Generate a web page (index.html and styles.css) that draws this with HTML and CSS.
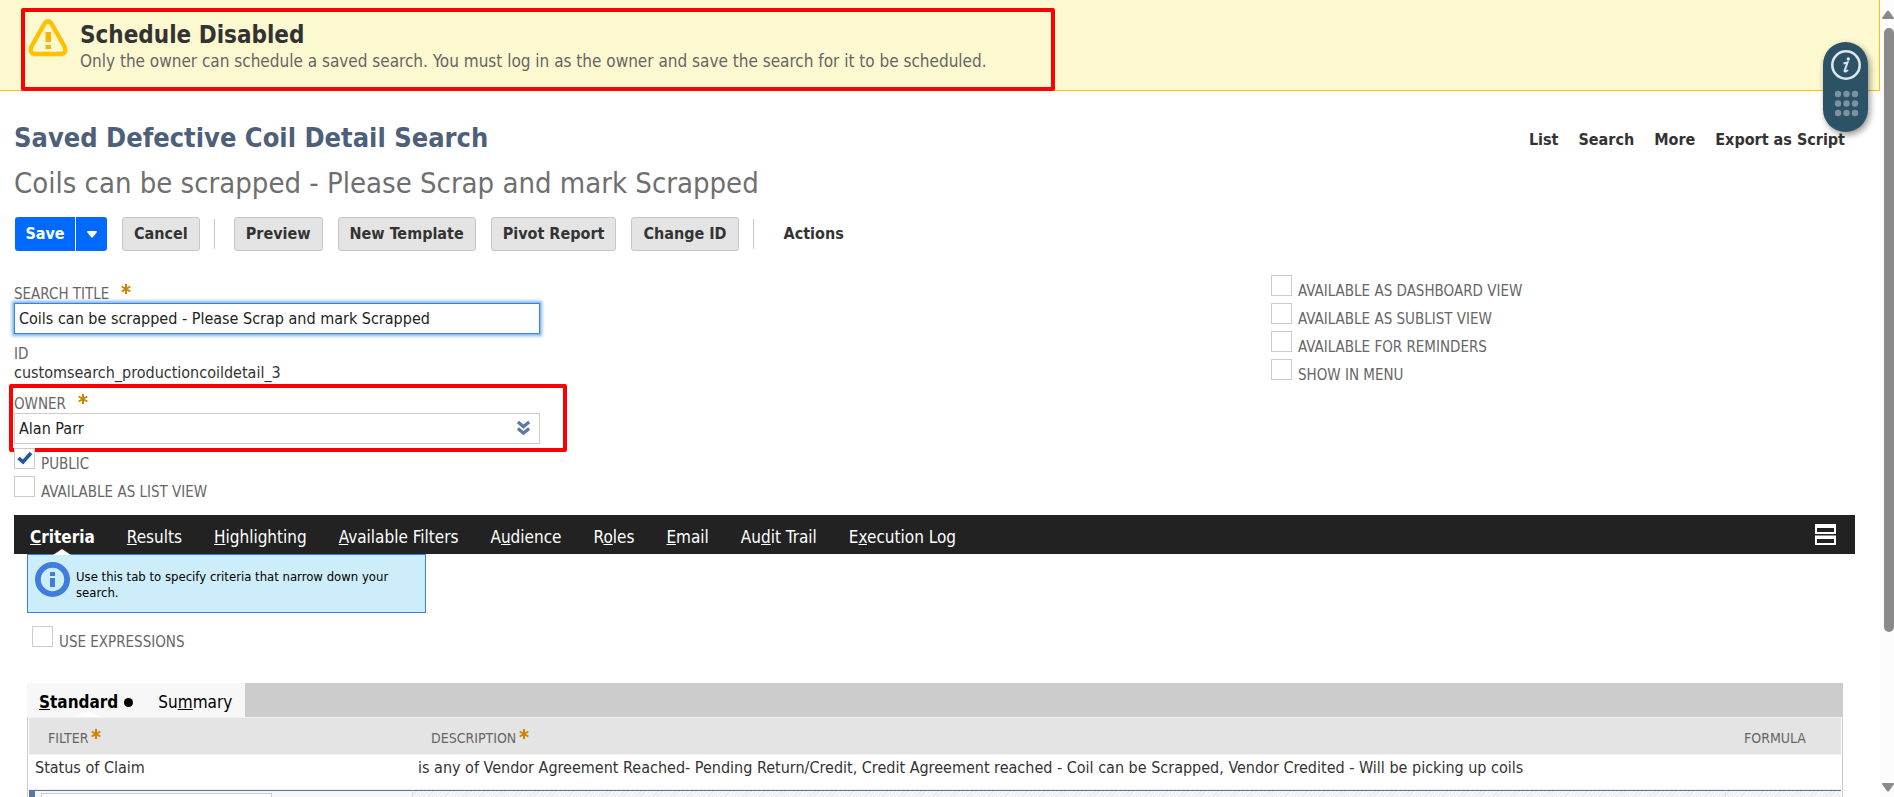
FILE: index.html
```html
<!DOCTYPE html>
<html lang="en">
<head>
<meta charset="utf-8">
<title>Saved Defective Coil Detail Search</title>
<link rel="stylesheet" href="styles.css">
</head>
<body>
<div class="page">
  <div class="banner" role="alert">
    <svg class="banner-icon" viewBox="0 0 40 38" aria-hidden="true">
      <path d="M16 5.500Q20 -1 24 5.500L36.500 27.500Q39 34.500 33 35H7Q1 34.500 3.500 27.500Z" fill="none" stroke="#ffc000" stroke-width="4.500" stroke-linejoin="round"/>
      <path d="M17.500 13h5.500v10h-5.500zM17.500 26h5.500v4h-5.500z" fill="#ffb000"/>
    </svg>
    <div>
      <h2 class="banner-title">Schedule Disabled</h2>
      <p class="banner-text">Only the owner can schedule a saved search. You must log in as the owner and save the search for it to be scheduled.</p>
    </div>
    <div class="mark mark-banner"></div>
  </div>

  <main class="main">
    <header class="head">
      <h1 class="title">Saved Defective Coil Detail Search</h1>
      <nav class="links">
        <a href="#">List</a><a href="#">Search</a><a href="#">More</a><a href="#">Export as Script</a>
      </nav>
    </header>
    <h2 class="record">Coils can be scrapped - Please Scrap and mark Scrapped</h2>

    <div class="toolbar">
      <div class="split">
        <button class="save" type="button">Save</button>
        <button class="save-more" type="button" aria-label="More save options"><svg width="10" height="7" viewBox="0 0 10 7"><path d="M0 1Q0 0 1 0H9Q10 0 10 1L6 6Q5 7 4 6Z" fill="#fff"/></svg></button>
      </div>
      <button class="btn" type="button">Cancel</button>
      <span class="sep"></span>
      <button class="btn first" type="button">Preview</button>
      <button class="btn" type="button">New Template</button>
      <button class="btn" type="button">Pivot Report</button>
      <button class="btn" type="button">Change ID</button>
      <span class="sep"></span>
      <button class="plain" type="button">Actions</button>
    </div>

    <div class="form">
      <div class="col">
        <div class="label-row"><label for="t">SEARCH TITLE</label><svg class="star" viewBox="0 0 10 10"><path d="M5 0V10M.7 2.500L9.300 7.500M.7 7.500L9.300 2.500"/></svg></div>
        <input class="text focus" id="t" type="text" value="Coils can be scrapped - Please Scrap and mark Scrapped">
        <div class="static"><span class="caption">ID</span><span class="value">customsearch_productioncoildetail_3</span></div>
        <div class="owner">
          <div class="label-row"><label for="o">OWNER</label><svg class="star" viewBox="0 0 10 10"><path d="M5 0V10M.7 2.500L9.300 7.500M.7 7.500L9.300 2.500"/></svg></div>
          <select class="text" id="o"><option>Alan Parr</option></select>
          <svg class="chevrons" viewBox="0 0 16 16"><path d="M2 1.500L8 6.500L14 1.500M2 8.500L8 13.500L14 8.500" fill="none" stroke="#5f7a9f" stroke-width="3.500"/></svg>
          <div class="mark mark-owner"></div>
        </div>
        <label class="check"><input type="checkbox" checked><svg class="tick" viewBox="0 0 16 14"><path d="M1.500 7L6 11L14 2" fill="none" stroke="#1f57a4" stroke-width="3.500"/></svg>PUBLIC</label>
        <label class="check"><input type="checkbox">AVAILABLE AS LIST VIEW</label>
      </div>
      <div class="col">
        <label class="check"><input type="checkbox">AVAILABLE AS DASHBOARD VIEW</label>
        <label class="check"><input type="checkbox">AVAILABLE AS SUBLIST VIEW</label>
        <label class="check"><input type="checkbox">AVAILABLE FOR REMINDERS</label>
        <label class="check"><input type="checkbox">SHOW IN MENU</label>
      </div>
    </div>

    <nav class="tabs">
      <a class="on" href="#"><u>C</u>riteria</a>
      <a href="#"><u>R</u>esults</a>
      <a href="#"><u>H</u>ighlighting</a>
      <a href="#"><u>A</u>vailable Filters</a>
      <a href="#">A<u>u</u>dience</a>
      <a href="#">R<u>o</u>les</a>
      <a href="#"><u>E</u>mail</a>
      <a href="#">Au<u>d</u>it Trail</a>
      <a href="#">E<u>x</u>ecution Log</a>
      <button class="layout" type="button" aria-label="Unlayered view"><svg width="21" height="21" viewBox="0 0 21 21"><path fill="#fff" fill-rule="evenodd" d="M0 0H21V10H0ZM2 4V8H19V4ZM0 11.500H21V21H0ZM2 15V19H19V15Z"/></svg></button>
    </nav>

    <section class="panel">
      <div class="hint">
        <svg class="hint-icon" viewBox="0 0 35 35"><circle cx="17.500" cy="17.500" r="14.600" fill="none" stroke="#3f7ddc" stroke-width="5.800"/><path d="M15 10h5v4h-5zM15 16h5v9h-5z" fill="#3f7ddc"/></svg>
        <p>Use this tab to specify criteria that narrow down your search.</p>
      </div>
      <label class="check expr"><input type="checkbox">USE EXPRESSIONS</label>

      <div class="subtabs">
        <a class="on" href="#"><span><u>S</u>tandard</span><span class="dot"></span></a>
        <a href="#">Su<u>m</u>mary</a>
      </div>
      <table class="grid">
        <colgroup><col class="c-edge"><col class="c-filter"><col><col class="c-formula"></colgroup>
        <thead>
          <tr><th colspan="2">FILTER<svg class="star" viewBox="0 0 10 10"><path d="M5 0V10M.7 2.500L9.300 7.500M.7 7.500L9.300 2.500"/></svg></th><th>DESCRIPTION<svg class="star" viewBox="0 0 10 10"><path d="M5 0V10M.7 2.500L9.300 7.500M.7 7.500L9.300 2.500"/></svg></th><th>FORMULA</th></tr>
        </thead>
        <tbody>
          <tr><td colspan="2">Status of Claim</td><td>is any of Vendor Agreement Reached- Pending Return/Credit, Credit Agreement reached - Coil can be Scrapped, Vendor Credited - Will be picking up coils</td><td></td></tr>
          <tr class="edit"><td class="handle"></td><td><input type="text" aria-label="Filter"></td><td class="hatch"></td><td class="hatch"></td></tr>
        </tbody>
      </table>
    </section>
  </main>
</div>

<div class="scroll" aria-hidden="true">
  <svg width="12" height="9" viewBox="0 0 12 9"><path d="M5 1Q6 0 7 1L12 8Q12 9 11 9H1Q0 9 0 8Z" fill="#8a8a8a"/></svg>
  <div class="track"><div class="thumb"></div></div>
  <svg width="12" height="9" viewBox="0 0 12 9"><path d="M5 8Q6 9 7 8L12 1Q12 0 11 0H1Q0 0 0 1Z" fill="#8a8a8a"/></svg>
</div>

<div class="widget">
  <svg width="45" height="90" viewBox="0 0 45 90">
    <circle cx="23" cy="23" r="13.700" fill="none" stroke="#dfe5ec" stroke-width="2.600"/>
    <circle cx="25.300" cy="17" r="1.700" fill="#dfe5ec"/>
    <path d="M20.500 21.500L24.500 20.500L21.500 29Q22 30.500 25 28" fill="none" stroke="#dfe5ec" stroke-width="2"/>
    <g fill="#7b93a1"><circle cx="15" cy="52" r="3.200"/><circle cx="23.500" cy="52" r="3.200"/><circle cx="32" cy="52" r="3.200"/><circle cx="15" cy="61.500" r="3.200"/><circle cx="23.500" cy="61.500" r="3.200"/><circle cx="32" cy="61.500" r="3.200"/><circle cx="15" cy="71" r="3.200"/><circle cx="23.500" cy="71" r="3.200"/><circle cx="32" cy="71" r="3.200"/></g>
  </svg>
</div>
</body>
</html>
```
FILE: styles.css
```css
* { box-sizing: border-box; }
body {
  margin: 0;
  display: flex;
  height: 100vh;
  overflow: hidden;
  background: #fff;
  color: #333;
  font: 16px/20px "DejaVu Sans Condensed", "Noto Sans", sans-serif;
}
h1, h2, p { margin: 0; }
a { color: inherit; text-decoration: none; }
button, input, select { font: inherit; color: inherit; }
.page { flex: 1; min-width: 0; }

.banner {
  position: relative;
  display: flex;
  gap: 12px;
  height: 91px;
  padding: 19px 28px 0;
  background: #fcf8cf;
  border: solid #ffc400;
  border-width: 0 1px 1px 0;
}
.banner-icon { width: 40px; height: 38px; flex: none; }
.banner-title { font-size: 24px; line-height: 32px; font-weight: 700; }
.banner-text { color: #666; font-size: 17px; line-height: 20px; }
.mark { position: absolute; border: 4px solid #f00; border-radius: 2px; pointer-events: none; }
.mark-banner { left: 21px; top: 8px; width: 1034px; height: 83px; }
.mark-owner { left: -5px; top: -1px; width: 558px; height: 68px; }

.main { padding: 29px 25px 0 14px; }
.head { display: flex; justify-content: space-between; align-items: center; height: 36px; }
.title { font-size: 27px; line-height: 36px; color: #4d5f79; }
.links { display: flex; gap: 20px; padding: 4px 10px 0 0; font-weight: 700; }
.record { margin-top: 7px; font-size: 29px; line-height: 40px; font-weight: 400; color: #6f6f6f; }

.toolbar { display: flex; align-items: center; gap: 15px; margin: 14px 0 0 1px; font-weight: 700; }
.split { display: flex; gap: 1px; height: 34px; border-radius: 3px; overflow: hidden; }
.split button { border: 0; padding: 0; background: #006aff; color: #fff; }
.save { width: 60px; }
.save-more { width: 31px; }
.save-more svg { vertical-align: middle; }
.btn { height: 34px; padding: 0 11px; border: 1px solid #c6c6c6; border-radius: 3px; background: #e4e4e4; }
.toolbar .sep { margin-left: -1px; }
.btn.first { margin-left: 4px; }
.sep { width: 1px; height: 30px; background: #c6c6c6; }
.plain { border: 0; background: none; padding: 0; margin-left: 15px; }

.form { display: grid; grid-template-columns: 1257px 1fr; margin-top: 24px; color: #666; }
.col { font-size: 15px; }
.label-row { display: flex; align-items: center; gap: 12px; line-height: 20px; height: 28px; padding-top: 10px; }
.label-row .star { margin-bottom: 10px; }
.star { width: 10px; height: 10px; }
.star path { stroke: #cc8400; stroke-width: 2; }
.text { display: block; width: 526px; height: 31px; padding: 0 4px; border: 1px solid #ccc; background: #fff; color: #222; font-size: 16px; appearance: none; border-radius: 0; }
.focus { border-color: #3b82d8; box-shadow: 0 0 3px 2px #7fb2ec; outline: none; }
.static { display: flex; flex-direction: column; margin-top: 11px; line-height: 19px; }
.value { font-size: 16px; line-height: 18px; color: #333; }
.owner { position: relative; margin-top: 3px; }
.chevrons { position: absolute; left: 502px; bottom: 8px; width: 15px; height: 16px; pointer-events: none; }
.check { position: relative; display: flex; align-items: flex-start; height: 28px; gap: 6px; line-height: 20px; padding-top: 6px; }
.check input { appearance: none; width: 21px; height: 21px; margin: -6px 0 0; border: 1px solid #ccc; background: #fff; }
.check .tick { position: absolute; left: 3px; top: 3px; width: 16px; height: 14px; }
.owner + .check { margin-top: 4px; }

.tabs { display: flex; align-items: center; gap: 32px; height: 39px; margin-top: 11px; padding: 4px 19px 0 16px; background: #222; color: #fff; font-size: 17px; }
.tabs .on { position: relative; font-weight: 700; }
.tabs .on::after { content: ""; position: absolute; left: 50%; bottom: -8px; margin-left: -9px; border: 9px solid transparent; border-top-width: 0; border-bottom: 6px solid #fff; }
.layout { margin: 0 0 4px auto; padding: 0; border: 0; background: none; height: 21px; }
.layout svg { display: block; }

.panel { padding: 0 12px 0 13px; }
.hint { display: flex; gap: 6px; width: 399px; height: 59px; padding: 7px; border: 1px solid #3f7ddc; background: #cdedfb; color: #000; font-size: 13px; line-height: 16px; }
.hint p { padding: 7px 20px 0 0; }
.hint-icon { width: 35px; height: 35px; flex: none; }
.expr { margin: 13px 0 0 5px; font-size: 15px; color: #666; }

.subtabs { display: flex; height: 34px; margin-top: 29px; background: #ccc; color: #000; font-size: 17px; line-height: 38px; }
.subtabs a { background: #f7f7f7; padding: 0 13px 0 12px; }
.subtabs .on { position: relative; display: flex; align-items: flex-start; gap: 6px; font-weight: 700; }
.subtabs .on::after { content: ""; position: absolute; left: 45px; bottom: 0; border: 15px solid transparent; border-top-width: 0; border-bottom: 6px solid #fff; }
.dot { width: 9px; height: 9px; margin-top: 15px; border-radius: 50%; background: #000; }

.grid { width: 100%; table-layout: fixed; border-collapse: separate; border-spacing: 0; border: solid #ccc; border-width: 0 1px; padding: 0 1px; }
.c-edge { width: 6px; }
.c-filter { width: 377px; }
.c-formula { width: 116px; }
.grid th { height: 38px; padding: 4px 0 0 19px; text-align: left; font-size: 14px; line-height: 20px; font-weight: 400; color: #666; background: #e4e4e4; border: solid #f2f2f2; border-width: 1px 0; }
.grid th .star { margin: 0 0 4px 3px; }
.grid td { height: 35px; padding: 0 0 8px 6px; line-height: 20px; white-space: nowrap; border-bottom: 1px solid #eee; }
.grid .edit td { height: 40px; padding: 2px 6px; border-top: 1px solid #5a75a0; background: #f7f7f7; vertical-align: top; }
.grid .edit .handle { background: #5a75a0; padding: 0; }
.edit input { display: block; width: 231px; height: 30px; border: 1px solid #ccc; background: #fff; }
.grid .edit .hatch { border-left: 1px solid #ddd; background: repeating-linear-gradient(135deg, #f7f7f7 0 2px, #e9e9e9 2px 3px); }

.scroll { width: 14px; flex: none; display: flex; flex-direction: column; align-items: flex-end; padding: 10px 0 5px; background: #fcfcfc; }
.track { flex: 1; width: 10px; padding: 9px 0; }
.thumb { height: 81%; border-radius: 5px; background: #8a8a8a; }

.widget { position: absolute; right: 26px; top: 42px; width: 45px; height: 90px; border-radius: 23px; background: #2c5265; box-shadow: 2px 3px 6px #0006; }
```
